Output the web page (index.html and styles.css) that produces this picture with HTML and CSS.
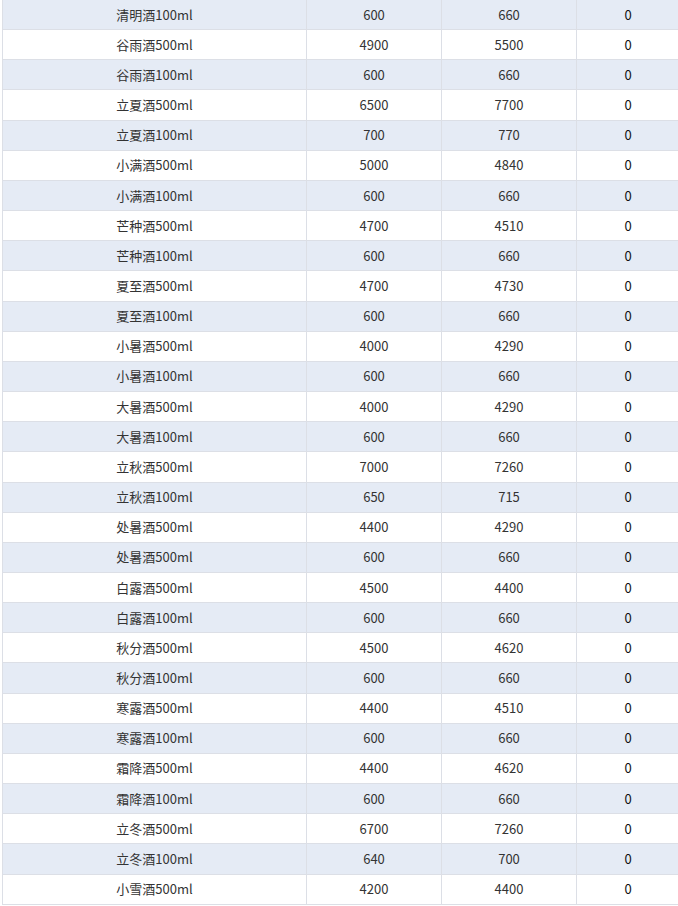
FILE: index.html
```html
<!DOCTYPE html>
<html lang="zh">
<head>
<meta charset="utf-8">
<link rel="stylesheet" href="styles.css">
</head>
<body>
<div class="wrap">
<table class="grid">
<colgroup><col class="c1"><col class="c2"><col class="c3"><col class="c4"></colgroup>
<tbody>
<tr class="alt"><td>清明酒100ml</td><td>600</td><td>660</td><td class="z">0</td></tr>
<tr><td>谷雨酒500ml</td><td>4900</td><td>5500</td><td class="z">0</td></tr>
<tr class="alt"><td>谷雨酒100ml</td><td>600</td><td>660</td><td class="z">0</td></tr>
<tr><td>立夏酒500ml</td><td>6500</td><td>7700</td><td class="z">0</td></tr>
<tr class="alt"><td>立夏酒100ml</td><td>700</td><td>770</td><td class="z">0</td></tr>
<tr><td>小满酒500ml</td><td>5000</td><td>4840</td><td class="z">0</td></tr>
<tr class="alt"><td>小满酒100ml</td><td>600</td><td>660</td><td class="z">0</td></tr>
<tr><td>芒种酒500ml</td><td>4700</td><td>4510</td><td class="z">0</td></tr>
<tr class="alt"><td>芒种酒100ml</td><td>600</td><td>660</td><td class="z">0</td></tr>
<tr><td>夏至酒500ml</td><td>4700</td><td>4730</td><td class="z">0</td></tr>
<tr class="alt"><td>夏至酒100ml</td><td>600</td><td>660</td><td class="z">0</td></tr>
<tr><td>小暑酒500ml</td><td>4000</td><td>4290</td><td class="z">0</td></tr>
<tr class="alt"><td>小暑酒100ml</td><td>600</td><td>660</td><td class="z">0</td></tr>
<tr><td>大暑酒500ml</td><td>4000</td><td>4290</td><td class="z">0</td></tr>
<tr class="alt"><td>大暑酒100ml</td><td>600</td><td>660</td><td class="z">0</td></tr>
<tr><td>立秋酒500ml</td><td>7000</td><td>7260</td><td class="z">0</td></tr>
<tr class="alt"><td>立秋酒100ml</td><td>650</td><td>715</td><td class="z">0</td></tr>
<tr><td>处暑酒500ml</td><td>4400</td><td>4290</td><td class="z">0</td></tr>
<tr class="alt"><td>处暑酒500ml</td><td>600</td><td>660</td><td class="z">0</td></tr>
<tr><td>白露酒500ml</td><td>4500</td><td>4400</td><td class="z">0</td></tr>
<tr class="alt"><td>白露酒100ml</td><td>600</td><td>660</td><td class="z">0</td></tr>
<tr><td>秋分酒500ml</td><td>4500</td><td>4620</td><td class="z">0</td></tr>
<tr class="alt"><td>秋分酒100ml</td><td>600</td><td>660</td><td class="z">0</td></tr>
<tr><td>寒露酒500ml</td><td>4400</td><td>4510</td><td class="z">0</td></tr>
<tr class="alt"><td>寒露酒100ml</td><td>600</td><td>660</td><td class="z">0</td></tr>
<tr><td>霜降酒500ml</td><td>4400</td><td>4620</td><td class="z">0</td></tr>
<tr class="alt"><td>霜降酒100ml</td><td>600</td><td>660</td><td class="z">0</td></tr>
<tr><td>立冬酒500ml</td><td>6700</td><td>7260</td><td class="z">0</td></tr>
<tr class="alt"><td>立冬酒100ml</td><td>640</td><td>700</td><td class="z">0</td></tr>
<tr><td>小雪酒500ml</td><td>4200</td><td>4400</td><td class="z">0</td></tr>
</tbody>
</table>
</div>
</body>
</html>
```
FILE: styles.css
```css
html, body {
  margin: 0;
  padding: 0;
  background: #fff;
  overflow: hidden;
}
.wrap {
  width: 678px;
  overflow: hidden;
  padding-left: 2px;
  margin-top: -1px;
  box-sizing: border-box;
}
.grid {
  border-collapse: collapse;
  table-layout: fixed;
  width: 677px;
  font-family: "Noto Sans CJK SC", "Noto Sans", sans-serif;
  font-size: 13px;
  color: #333;
}
.c1 { width: 304px; }
.c2, .c3 { width: 135px; }
.c4 { width: 103px; }
.grid td {
  height: 29.17px;
  padding: 0;
  text-align: center;
  vertical-align: middle;
  border: 1px solid #dcdfe6;
  line-height: 16px;
  box-sizing: border-box;
}
.grid td.z { color: #111; }
.grid tr { height: 30.17px; }
.grid tr.alt td { background: #e5ebf5; }
```
